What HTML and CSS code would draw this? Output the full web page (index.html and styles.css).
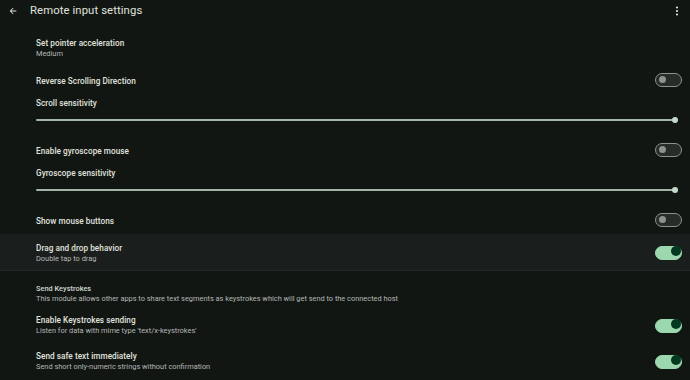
FILE: index.html
```html
<!DOCTYPE html>
<html lang="en">
<head>
    <meta charset="UTF-8">
    <meta name="viewport" content="width=device-width, initial-scale=1.0">
    <title>Remote input settings</title>
    <link rel="stylesheet" href="styles.css">
</head>
<body>
    <header class="app-bar">
        <svg class="back-icon" width="10" height="10" viewBox="0 0 24 24">
            <path d="M20 11H7.83l5.59-5.59L12 4l-8 8 8 8 1.41-1.41L7.83 13H20v-2z" fill="#e0e3df"/>
        </svg>
        <h1 class="app-title">Remote input settings</h1>
        <svg class="menu-icon" width="4" height="10" viewBox="0 0 4 10">
            <circle cx="2" cy="1.5" r="1.1" fill="#e0e3df"/>
            <circle cx="2" cy="5" r="1.1" fill="#e0e3df"/>
            <circle cx="2" cy="8.5" r="1.1" fill="#e0e3df"/>
        </svg>
    </header>

    <main class="settings">
        <div class="pref pref-first">
            <div class="pref-text">
                <div class="pref-title">Set pointer acceleration</div>
                <div class="pref-summary">Medium</div>
            </div>
        </div>

        <div class="pref pref-single">
            <div class="pref-text">
                <div class="pref-title">Reverse Scrolling Direction</div>
            </div>
            <span class="switch"></span>
        </div>

        <div class="pref-slider">
            <div class="pref-title">Scroll sensitivity</div>
            <div class="slider"><span class="slider-thumb"></span></div>
        </div>

        <div class="pref pref-single">
            <div class="pref-text">
                <div class="pref-title">Enable gyroscope mouse</div>
            </div>
            <span class="switch"></span>
        </div>

        <div class="pref-slider">
            <div class="pref-title">Gyroscope sensitivity</div>
            <div class="slider"><span class="slider-thumb"></span></div>
        </div>

        <div class="pref pref-single">
            <div class="pref-text">
                <div class="pref-title">Show mouse buttons</div>
            </div>
            <span class="switch"></span>
        </div>

        <div class="pref pref-double pref-pressed">
            <div class="pref-text">
                <div class="pref-title">Drag and drop behavior</div>
                <div class="pref-summary">Double tap to drag</div>
            </div>
            <span class="switch on"></span>
        </div>

        <div class="category">
            <div class="category-title">Send Keystrokes</div>
            <div class="pref-summary">This module allows other apps to share text segments as keystrokes which will get send to the connected host</div>
        </div>

        <div class="pref pref-double">
            <div class="pref-text">
                <div class="pref-title">Enable Keystrokes sending</div>
                <div class="pref-summary">Listen for data with mime type 'text/x-keystrokes'</div>
            </div>
            <span class="switch on"></span>
        </div>

        <div class="pref pref-double">
            <div class="pref-text">
                <div class="pref-title">Send safe text immediately</div>
                <div class="pref-summary">Send short only-numeric strings without confirmation</div>
            </div>
            <span class="switch on"></span>
        </div>
    </main>
</body>
</html>
```

FILE: styles.css
```css
:root {
    --bg: #111613;
    --bg-pressed: #1a1e1c;
    --divider: #222724;
    --text: #e0e3df;
    --text-muted: #b4b8b4;
    --switch-off: #8b938d;
    --switch-off-track: #272c29;
    --switch-on-track: #9bd8ae;
    --switch-on-thumb: #00391f;
    --slider: #a3b6a8;
}

body {
    margin: 0;
    background-color: var(--bg);
    font-family: Roboto, "Noto Sans", sans-serif;
    color: var(--text);
    width: 690px;
    height: 380px;
    overflow: hidden;
}

.app-bar {
    display: flex;
    align-items: center;
    height: 21px;
    padding: 0 11px 0 8px;
}

.back-icon {
    margin-top: 1px;
}

.app-title {
    flex: 1;
    margin: 0 0 0 12px;
    font-size: 11.3px;
    font-weight: 400;
    line-height: 21px;
    letter-spacing: 0.1px;
}

.menu-icon {
    margin-top: 1px;
}

.pref {
    display: flex;
    align-items: center;
    padding: 0 8px 0 36px;
}

.pref-text {
    flex: 1;
}

.pref-first {
    height: 45px;
    align-items: flex-start;
    padding-top: 17px;
    box-sizing: border-box;
}

.pref-single {
    height: 28px;
}

.pref-single .pref-text {
    padding-top: 2px;
}

.pref-double {
    height: 36px;
    box-sizing: border-box;
    padding-top: 1px;
}

.pref-pressed {
    background-color: var(--bg-pressed);
    border-bottom: 1px solid var(--divider);
    height: 37px;
}

.pref-pressed .pref-text {
    padding-top: 2px;
}

.pref-title {
    font-size: 8.2px;
    font-weight: 500;
    line-height: 11px;
    letter-spacing: 0.05px;
}

.pref-summary {
    font-size: 7.4px;
    line-height: 10px;
    color: var(--text-muted);
}

.pref-slider {
    height: 42px;
    box-sizing: border-box;
    padding: 4px 15px 0 36px;
}

.slider {
    position: relative;
    height: 2px;
    margin-top: 10px;
    background-color: var(--slider);
    border-radius: 1px;
}

.slider-thumb {
    position: absolute;
    right: -3px;
    top: -2px;
    width: 6px;
    height: 6px;
    border-radius: 50%;
    background-color: #c3dac9;
}

.switch {
    position: relative;
    width: 27px;
    height: 14px;
    box-sizing: border-box;
    border: 1.5px solid var(--switch-off);
    border-radius: 8px;
    background-color: var(--switch-off-track);
}

.switch::after {
    content: "";
    position: absolute;
    left: 2.5px;
    top: 2px;
    width: 7px;
    height: 7px;
    border-radius: 50%;
    background-color: var(--switch-off);
}

.switch.on {
    border-color: var(--switch-on-track);
    background-color: var(--switch-on-track);
}

.switch.on::after {
    left: auto;
    right: 0;
    top: -0.5px;
    width: 10px;
    height: 10px;
    background-color: var(--switch-on-thumb);
}

.category {
    height: 36px;
    box-sizing: border-box;
    padding: 13px 8px 0 36px;
}

.category-title {
    font-size: 7.4px;
    font-weight: 500;
    line-height: 10px;
    color: #d2d8d2;
}
```
